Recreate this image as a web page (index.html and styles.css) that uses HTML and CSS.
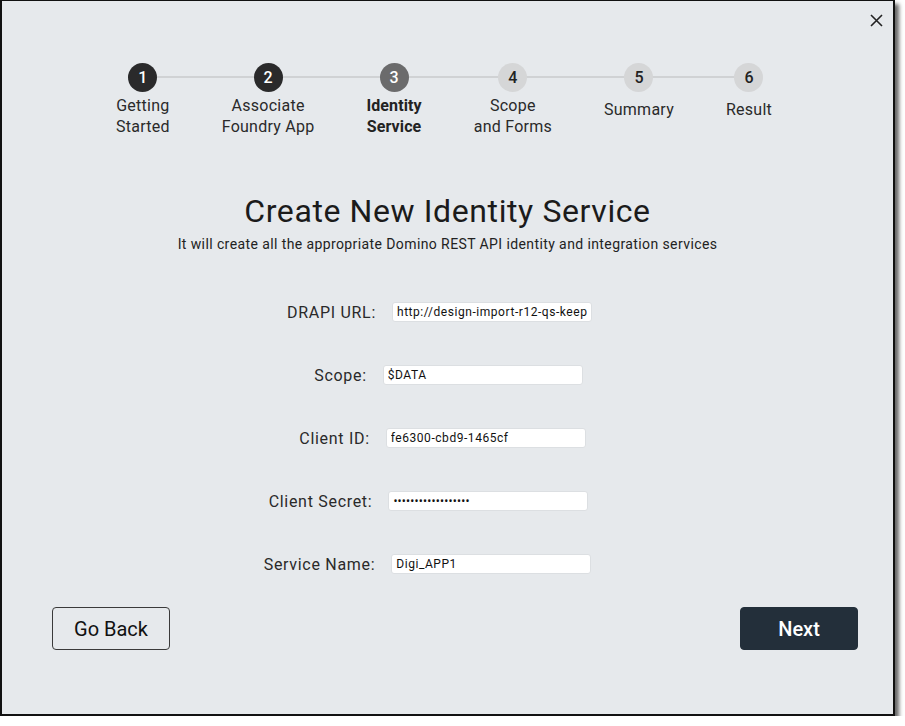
FILE: index.html
```html
<!DOCTYPE html>
<html lang="en">
<head>
<meta charset="utf-8">
<title>Create New Identity Service</title>
<link rel="stylesheet" href="styles.css">
</head>
<body>
<div class="window">
  <button class="close" aria-label="Close">
    <svg width="13" height="13" viewBox="0 0 13 13"><path d="M1 1L12 12M12 1L1 12" stroke="#222" stroke-width="1.6" fill="none"/></svg>
  </button>

  <div class="stepper-wrap">
    <ol class="stepper">
      <li class="step done"><span class="num">1</span><span class="label">Getting<br>Started</span></li>
      <li class="step done"><span class="num">2</span><span class="label">Associate<br>Foundry App</span></li>
      <li class="step current"><span class="num">3</span><span class="label">Identity<br>Service</span></li>
      <li class="step"><span class="num">4</span><span class="label">Scope<br>and Forms</span></li>
      <li class="step"><span class="num">5</span><span class="label single">Summary</span></li>
      <li class="step"><span class="num">6</span><span class="label single">Result</span></li>
    </ol>
  </div>

  <h1 class="title">Create New Identity Service</h1>
  <p class="subtitle">It will create all the appropriate Domino REST API identity and integration services</p>

  <form class="form">
    <div class="row row-a"><label>DRAPI URL:</label><input type="text" value="http://design-import-r12-qs-keep"></div>
    <div class="row row-b"><label>Scope:</label><input type="text" value="$DATA"></div>
    <div class="row row-c"><label>Client ID:</label><input type="text" value="fe6300-cbd9-1465cf"></div>
    <div class="row row-d"><label>Client Secret:</label><input type="password" value="••••••••••••••••••"></div>
    <div class="row row-e"><label>Service Name:</label><input type="text" value="Digi_APP1"></div>
  </form>

  <div class="actions">
    <button class="btn btn-outline">Go Back</button>
    <button class="btn btn-primary">Next</button>
  </div>
</div>
</body>
</html>
```

FILE: styles.css
```css
* { box-sizing: border-box; }
html, body { margin: 0; padding: 0; background: #ffffff; }
body {
  font-family: Roboto, "Liberation Sans", Arial, sans-serif;
  color: #222;
}
.window {
  position: relative;
  width: 895px;
  height: 716px;
  background: #e6e9ec;
  border: 2px solid #111;
  border-top-width: 1px;
  box-shadow: 4px 4px 4px rgba(0, 0, 0, 0.6);
  display: flex;
  flex-direction: column;
  padding-top: 62px;
}
.close {
  position: absolute;
  top: 13px;
  right: 10px;
  width: 13px;
  height: 13px;
  padding: 0;
  border: none;
  background: transparent;
  display: flex;
}

.stepper-wrap {
  display: flex;
  justify-content: center;
  padding-right: 7px;
}
.stepper {
  position: relative;
  list-style: none;
  margin: 0;
  padding: 0;
  display: flex;
  gap: 52px;
}
.stepper::before {
  content: "";
  position: absolute;
  top: 13px;
  left: 27px;
  right: 23px;
  height: 2px;
  background: #d0d2d4;
}
.step {
  position: relative;
  display: flex;
  flex-direction: column;
  align-items: center;
}
.num {
  width: 29px;
  height: 29px;
  border-radius: 50%;
  background: #d5d6d7;
  color: #222;
  display: flex;
  align-items: center;
  justify-content: center;
  font-size: 16px;
  font-weight: 500;
}
.step.done .num { background: #2a2a2b; color: #fff; }
.step.current .num { background: #6b6b6c; color: #fff; }
.label {
  margin-top: 3px;
  font-size: 16px;
  line-height: 21px;
  letter-spacing: 0.25px;
  text-align: center;
  color: #2a2a2a;
  white-space: nowrap;
}
.label.single { margin-top: 7px; }
.step.current .label { font-weight: 700; color: #222; letter-spacing: 0.1px; }

.title {
  margin: 55px 0 0;
  font-size: 32px;
  line-height: 38px;
  font-weight: 400;
  letter-spacing: 0.6px;
  text-align: center;
  color: #1b1b1b;
}
.subtitle {
  margin: 4px 0 0;
  font-size: 14px;
  line-height: 20px;
  letter-spacing: 0.4px;
  text-align: center;
  color: #222;
}

.form {
  margin-top: 48px;
  display: flex;
  flex-direction: column;
  gap: 43px;
}
.row {
  display: flex;
  justify-content: center;
  align-items: center;
  gap: 16px;
  height: 20px;
}
.row-a { padding-right: 16px; }
.row-b { padding-left: 2px; }
.row-c { padding-right: 10px; }
.row-d { padding-right: 38px; }
.row-e { padding-right: 40px; }
.row label {
  font-size: 16px;
  letter-spacing: 0.7px;
  color: #2a2a2a;
}
.row input {
  width: 200px;
  height: 20px;
  border: 1px solid #dcdfe2;
  border-radius: 3px;
  background: #fff;
  padding: 0 4px;
  font-family: Roboto, "Liberation Sans", Arial, sans-serif;
  font-size: 12px;
  letter-spacing: 0.55px;
  color: #111;
  outline: none;
}
.row input[type="password"] { font-size: 12px; letter-spacing: 0.2px; }

.actions {
  margin-top: 33px;
  padding: 0 35px 0 50px;
  display: flex;
  justify-content: space-between;
}
.btn {
  width: 118px;
  height: 43px;
  border-radius: 4px;
  font-family: Roboto, "Liberation Sans", Arial, sans-serif;
  font-size: 20px;
  cursor: pointer;
}
.btn-outline {
  background: transparent;
  border: 1px solid #3a3a3a;
  color: #111;
}
.btn-primary {
  background: #232f3a;
  border: 1px solid #232f3a;
  color: #fff;
  font-weight: 500;
}
```
